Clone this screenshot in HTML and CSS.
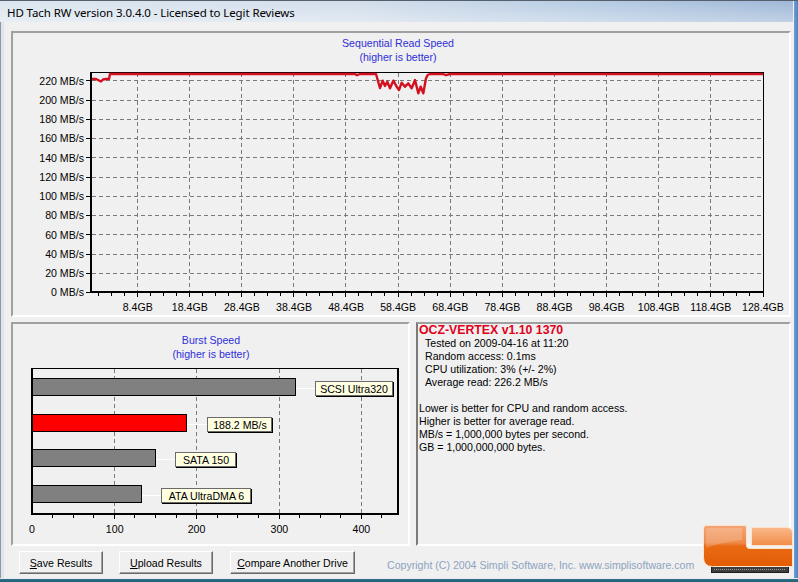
FILE: index.html
```html
<!DOCTYPE html>
<html>
<head>
<meta charset="utf-8">
<title>HD Tach RW</title>
<link rel="stylesheet" href="styles.css">
</head>
<body>
<div class="window">
  <div class="titlebar">HD Tach RW version 3.0.4.0 - Licensed to Legit Reviews</div>
  <div class="frame-right"></div>
  <div class="frame-left"></div>
  <div class="client">
    <section class="panel chart-panel">
      <svg class="chart" width="776" height="282" viewBox="13 33 776 282">
        <text class="ttl" x="398" y="47">Sequential Read Speed</text>
        <text class="ttl" x="398" y="61">(higher is better)</text>
        <path class="grid" d="M92 80.5H763M92 100.5H763M92 119.5H763M92 138.5H763M92 157.5H763M92 177.5H763M92 196.5H763M92 215.5H763M92 234.5H763M92 254.5H763M92 273.5H763"/>
        <path class="grid" d="M137.5 73V291M189.5 73V291M241.5 73V291M293.5 73V291M345.5 73V291M398.5 73V291M450.5 73V291M502.5 73V291M554.5 73V291M606.5 73V291M658.5 73V291M710.5 73V291"/>
        <path class="tick" d="M86 80.5h4M86 100.5h4M86 119.5h4M86 138.5h4M86 157.5h4M86 177.5h4M86 196.5h4M86 215.5h4M86 234.5h4M86 254.5h4M86 273.5h4M86 292.5h4"/>
        <path class="tick" d="M98.5 293v3M111.5 293v3M124.5 293v3M137.5 293v4M150.5 293v3M163.5 293v3M176.5 293v3M189.5 293v4M202.5 293v3M215.5 293v3M228.5 293v3M241.5 293v4M254.5 293v3M267.5 293v3M280.5 293v3M293.5 293v4M306.5 293v3M319.5 293v3M332.5 293v3M345.5 293v4M358.5 293v3M371.5 293v3M384.5 293v3M398.5 293v4M411.5 293v3M424.5 293v3M437.5 293v3M450.5 293v4M463.5 293v3M476.5 293v3M489.5 293v3M502.5 293v4M515.5 293v3M528.5 293v3M541.5 293v3M554.5 293v4M567.5 293v3M580.5 293v3M593.5 293v3M606.5 293v4M619.5 293v3M632.5 293v3M645.5 293v3M658.5 293v4M671.5 293v3M684.5 293v3M697.5 293v3M710.5 293v4M723.5 293v3M736.5 293v3M749.5 293v3M763.5 293v4"/>
        <rect x="90" y="72" width="674" height="1" fill="#000"/>
        <rect x="763" y="72" width="1" height="221" fill="#000"/>
        <polyline class="speed" points="92,79 96,79 99,80.5 101,81.5 103,79.5 106,79 109,79 110,74 355,74 357,75.2 360,74 376,74 380,88 382.7,80.7 385,86 387.3,81.7 390,88.3 393.3,80.7 396.7,86.7 399,90 401.7,82.7 405,86.7 408.3,83.3 411.7,88.3 415,80 418.3,93.3 420.7,86.7 423.3,93.3 426,78.3 427.7,75 430,74 443,74 446,75.2 450,74 763,74"/>
        <rect x="90" y="72" width="2" height="221" fill="#000"/>
        <rect x="90" y="291" width="674" height="2" fill="#000"/>
        <g class="ylab">
          <text x="84" y="84.5">220 MB/s</text>
          <text x="84" y="103.8">200 MB/s</text>
          <text x="84" y="123">180 MB/s</text>
          <text x="84" y="142.3">160 MB/s</text>
          <text x="84" y="161.5">140 MB/s</text>
          <text x="84" y="180.8">120 MB/s</text>
          <text x="84" y="200">100 MB/s</text>
          <text x="84" y="219.3">80 MB/s</text>
          <text x="84" y="238.5">60 MB/s</text>
          <text x="84" y="257.8">40 MB/s</text>
          <text x="84" y="277">20 MB/s</text>
          <text x="84" y="296.3">0 MB/s</text>
        </g>
        <g class="xlab">
          <text x="137.7" y="311">8.4GB</text>
          <text x="189.8" y="311">18.4GB</text>
          <text x="241.9" y="311">28.4GB</text>
          <text x="294" y="311">38.4GB</text>
          <text x="346.1" y="311">48.4GB</text>
          <text x="398.2" y="311">58.4GB</text>
          <text x="450.3" y="311">68.4GB</text>
          <text x="502.4" y="311">78.4GB</text>
          <text x="554.5" y="311">88.4GB</text>
          <text x="606.6" y="311">98.4GB</text>
          <text x="658.7" y="311">108.4GB</text>
          <text x="710.8" y="311">118.4GB</text>
          <text x="763" y="311">128.4GB</text>
        </g>
      </svg>
    </section>
    <div class="bottom-row">
      <section class="panel burst-panel">
        <svg class="chart" width="395" height="220" viewBox="13 324 395 220">
          <text class="ttl" x="211" y="343.5">Burst Speed</text>
          <text class="ttl" x="211" y="357.5">(higher is better)</text>
          <path class="grid" d="M114.5 369V513M196.5 369V513M279.5 369V513M361.5 369V513"/>
          <path class="tick" d="M52.5 515v3M73.5 515v3M93.5 515v3M114.5 515v4M134.5 515v3M155.5 515v3M176.5 515v3M196.5 515v4M217.5 515v3M237.5 515v3M258.5 515v3M279.5 515v4M299.5 515v3M320.5 515v3M340.5 515v3M361.5 515v4M381.5 515v3"/>
          <rect x="31" y="368" width="368" height="1" fill="#000"/>
          <rect x="397" y="368" width="2" height="147" fill="#000"/>

          <path class="leader" d="M296 388.5H315M187 424.5H207M156 459.5H176M142 495.5H162"/>

          <rect class="bar" x="32.5" y="378.5" width="263" height="17"/>
          <rect class="bar red" x="32.5" y="414.5" width="154" height="17"/>
          <rect class="bar" x="32.5" y="449.5" width="123" height="17"/>
          <rect class="bar" x="32.5" y="485.5" width="109" height="17"/>

          <rect class="lbl-shadow" x="316" y="382" width="78" height="15"/>
          <rect class="lbl" x="315.5" y="381.5" width="77" height="14"/>
          <text class="lbl-text" x="354" y="392.7">SCSI Ultra320</text>

          <rect class="lbl-shadow" x="208" y="418" width="65" height="15"/>
          <rect class="lbl" x="207.5" y="417.5" width="64" height="14"/>
          <text class="lbl-text" x="240" y="428.7">188.2 MB/s</text>

          <rect class="lbl-shadow" x="176" y="453" width="61" height="15"/>
          <rect class="lbl" x="175.5" y="452.5" width="60" height="14"/>
          <text class="lbl-text" x="206" y="463.7">SATA 150</text>

          <rect class="lbl-shadow" x="162" y="489" width="90" height="15"/>
          <rect class="lbl" x="161.5" y="488.5" width="89" height="14"/>
          <text class="lbl-text" x="206.5" y="499.7">ATA UltraDMA 6</text>

          <rect x="31" y="368" width="2" height="147" fill="#000"/>
          <rect x="31" y="513" width="368" height="2" fill="#000"/>

          <g class="xlab">
            <text x="32" y="533">0</text>
            <text x="114.7" y="533">100</text>
            <text x="196.5" y="533">200</text>
            <text x="279.4" y="533">300</text>
            <text x="361.4" y="533">400</text>
          </g>
        </svg>
      </section>
      <section class="info">
        <div class="info-title">OCZ-VERTEX v1.10 1370</div>
        <div class="indent">Tested on 2009-04-16 at 11:20</div>
        <div class="indent">Random access: 0.1ms</div>
        <div class="indent">CPU utilization: 3% (+/- 2%)</div>
        <div class="indent">Average read: 226.2 MB/s</div>
        <div class="blank"></div>
        <div>Lower is better for CPU and random access.</div>
        <div>Higher is better for average read.</div>
        <div>MB/s = 1,000,000 bytes per second.</div>
        <div>GB = 1,000,000,000 bytes.</div>
      </section>
    </div>
    <div class="footer">
      <button class="btn btn-save"><u>S</u>ave Results</button>
      <button class="btn btn-upload"><u>U</u>pload Results</button>
      <button class="btn btn-compare"><u>C</u>ompare Another Drive</button>
      <span class="copyright">Copyright (C) 2004 Simpli Software, Inc. www.simplisoftware.com</span>
    </div>
    <svg class="logo" width="95" height="56" viewBox="700 520 95 56">
      <defs>
        <linearGradient id="gBig" x1="0" y1="0" x2="0" y2="1">
          <stop offset="0" stop-color="#f4a574"/>
          <stop offset="0.42" stop-color="#ee8a4a"/>
          <stop offset="0.5" stop-color="#e96a14"/>
          <stop offset="1" stop-color="#e35c04"/>
        </linearGradient>
        <linearGradient id="gSmall" x1="0" y1="0" x2="0" y2="1">
          <stop offset="0" stop-color="#f9b98a"/>
          <stop offset="1" stop-color="#f28c48"/>
        </linearGradient>
      </defs>
      <rect x="711.5" y="566.5" width="77" height="6" fill="#3d3d3d" stroke="#1e1e1e"/>
      <path d="M714 569.5H786" stroke="#9a9a9a" stroke-dasharray="1 1"/>
      <path d="M703.5 528.5Q703.5 525.5 706.5 525.5H744.5Q746.5 525.5 746.5 527.5V545.5Q746.5 548.5 749.5 548.5H792.5V566.5H712.5Q703.5 566.5 703.5 557.5Z" fill="url(#gBig)" stroke="#fde3cc"/>
      <path d="M751.5 527.5H786.5Q792.5 527.5 792.5 533.5V545.5H751.5Z" fill="url(#gSmall)" stroke="#fde3cc"/>
      <path d="M706 531Q706 528 709 528H742V540Q722 542 706 548Z" fill="#ffffff" opacity="0.18"/>
    </svg>
  </div>
  <div class="frame-bottom"></div>
</div>
</body>
</html>
```

FILE: styles.css
```css
* {
  box-sizing: border-box;
}

html,
body {
  margin: 0;
  padding: 0;
}

body {
  width: 798px;
  height: 582px;
  overflow: hidden;
  background: #f0f0f0;
  font-family: "Liberation Sans", Arial, sans-serif;
  font-size: 10.6px;
  color: #000;
}

.window {
  width: 798px;
  height: 582px;
  display: grid;
  grid-template-columns: 4px 789px 5px;
  grid-template-rows: 22px 556px 4px;
}

.titlebar {
  grid-column: 1 / 3;
  grid-row: 1;
  border-top: 1px solid #56606c;
  padding: 3px 0 0 7px;
  font-family: "Noto Sans", "Liberation Sans", sans-serif;
  font-size: 11.5px;
  letter-spacing: -0.1px;
  line-height: 18px;
  color: #000;
  white-space: nowrap;
  background:
    linear-gradient(to bottom, rgba(255, 255, 255, 0) 0%, rgba(255, 255, 255, 0.35) 100%),
    linear-gradient(to right, #dce5ef 0%, #d3deeb 45%, #b6cbe3 75%, #9fb8d7 100%);
}

.frame-right {
  grid-column: 3;
  grid-row: 1 / 3;
  border-top: 1px solid #56606c;
  background: linear-gradient(to right, #eef3f8 0 1px, #6f9ccf 1px, #4f84c2 100%);
}

.frame-left {
  grid-column: 1;
  grid-row: 2;
  border-left: 1px solid #8a98a8;
  background: #dfe5ec;
}

.frame-bottom {
  grid-column: 1 / 4;
  grid-row: 3;
  background: linear-gradient(to bottom, #e4ebf2 0 1px, #2f6f86 1px, #245f76 100%);
}

.client {
  grid-column: 2;
  grid-row: 2;
  position: relative;
  background: #f0f0f0;
  padding: 9px 2px 0 7px;
  display: flex;
  flex-direction: column;
}

.panel {
  border: 2px solid;
  border-color: #a0a0a0 #ffffff #ffffff #a0a0a0;
}

.chart-panel {
  width: 780px;
  height: 286px;
}

.chart {
  display: block;
}

.bottom-row {
  display: flex;
  gap: 6px;
  margin-top: 5px;
  height: 224px;
}

.burst-panel {
  width: 399px;
  height: 224px;
}

.info {
  width: 375px;
  height: 224px;
  border: 2px solid;
  border-color: #a0a0a0 #ffffff #ffffff #7a7a7a;
  padding: 0 0 0 1px;
  line-height: 13px;
  font-size: 10.6px;
}

.info-title {
  color: #e0001b;
  font-weight: bold;
  font-size: 12.3px;
}

.indent {
  padding-left: 6px;
}

.blank {
  height: 13px;
}

.footer {
  display: flex;
  align-items: center;
  margin-top: 5px;
  height: 23px;
  padding-left: 8px;
}

.btn {
  height: 23px;
  padding: 0;
  margin: 0;
  font-family: "Liberation Sans", Arial, sans-serif;
  font-size: 10.6px;
  color: #000;
  background: #f0f0f0;
  border: 1px solid;
  border-color: #ffffff #696969 #696969 #ffffff;
  box-shadow: inset -1px -1px 0 #a0a0a0;
}

.btn-save {
  width: 84px;
}

.btn-upload {
  width: 94px;
  margin-left: 16px;
}

.btn-compare {
  width: 125px;
  margin-left: 17px;
}

.copyright {
  margin-left: 32px;
  padding-top: 4px;
  color: #8ea3bf;
  white-space: nowrap;
}

.logo {
  position: absolute;
  left: 696px;
  top: 498px;
  overflow: visible;
}

/* SVG chart styles */
.ttl {
  font-family: "Liberation Sans", Arial, sans-serif;
  font-size: 10.6px;
  fill: #2f2fd8;
  text-anchor: middle;
}

.grid {
  fill: none;
  stroke: #7a7a7a;
  stroke-width: 1;
  stroke-dasharray: 4 3;
}

.tick {
  fill: none;
  stroke: #000;
  stroke-width: 1;
}

.speed {
  fill: none;
  stroke: #d3101f;
  stroke-width: 2.4;
  stroke-linejoin: round;
}

.ylab text {
  font-family: "Liberation Sans", Arial, sans-serif;
  font-size: 10.6px;
  fill: #000;
  text-anchor: end;
}

.xlab text {
  font-family: "Liberation Sans", Arial, sans-serif;
  font-size: 10.6px;
  fill: #000;
  text-anchor: middle;
}

.leader {
  fill: none;
  stroke: #ffffff;
  stroke-width: 1;
}

.bar {
  fill: #808080;
  stroke: #000;
  stroke-width: 1;
}

.bar.red {
  fill: #ff0000;
}

.lbl-shadow {
  fill: #000;
}

.lbl {
  fill: #ffffe1;
  stroke: #6a6a6a;
  stroke-width: 1;
}

.lbl-text {
  font-family: "Liberation Sans", Arial, sans-serif;
  font-size: 10.6px;
  fill: #000;
  text-anchor: middle;
}
```
